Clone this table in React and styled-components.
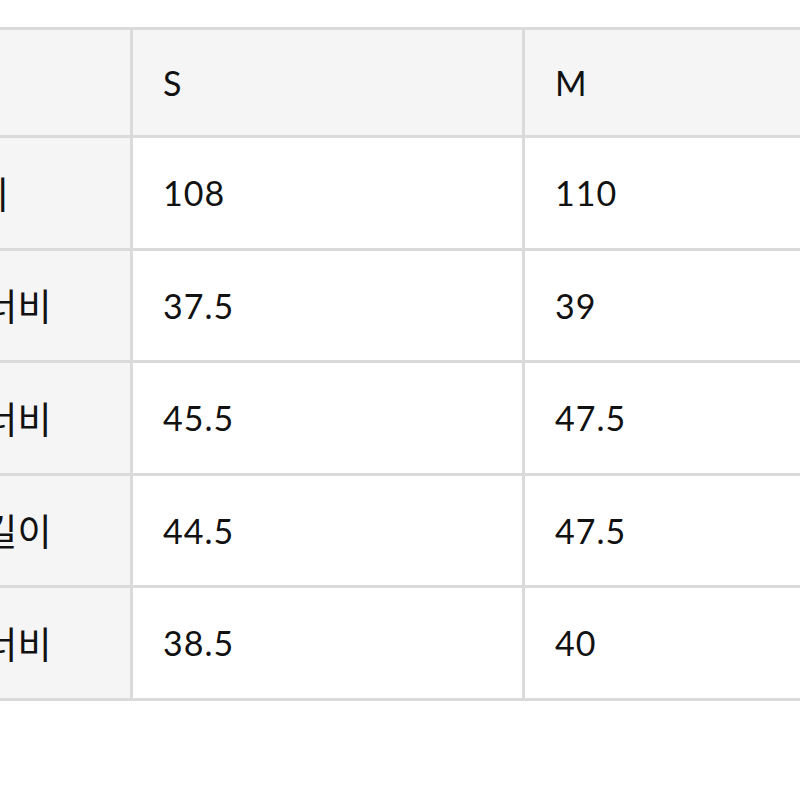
import React from "react";
import styled, { createGlobalStyle } from "styled-components";

const Global = createGlobalStyle`
  html, body { margin: 0; padding: 0; background: #ffffff; }
  body { overflow: hidden; width: 800px; height: 800px; }
`;

const Page = styled.div`
  width: 800px;
  height: 800px;
  overflow: hidden;
  background: #ffffff;
  padding-top: 27px;
  box-sizing: border-box;
`;

const Table = styled.div`
  display: grid;
  grid-template-columns: 244px 389px 389px;
  grid-template-rows: 105px repeat(5, 109.5px);
  gap: 3px;
  padding: 3px;
  background: #dadada;
  width: max-content;
  margin-left: -117px;
`;

const Cell = styled.div`
  display: flex;
  align-items: center;
  padding-left: 30px;
  background: ${(p) => (p.$shaded ? "#f5f5f5" : "#ffffff")};
  color: #111111;
  font-family: Lato, "Noto Sans CJK KR", sans-serif;
  font-size: 34px;
  letter-spacing: 1px;
  white-space: nowrap;
`;

const LabelCell = styled(Cell)`
  padding-left: 21px;
  background: #f5f5f5;
  font-family: "Noto Sans CJK KR", sans-serif;
  font-size: 37px;
  letter-spacing: 0;
`;

const sizes = ["S", "M", "L"];
const rows = [
  ["총길이", "108", "110", "112"],
  ["어깨 너비", "37.5", "39", "40.5"],
  ["가슴 너비", "45.5", "47.5", "49.5"],
  ["소매 길이", "44.5", "47.5", "48.5"],
  ["밑단 너비", "38.5", "40", "41.5"],
];

export default function App() {
  return (
    <Page>
      <Global />
      <Table>
        <LabelCell />
        {sizes.slice(0, 2).map((s) => (
          <Cell key={s} $shaded>
            {s}
          </Cell>
        ))}
        {rows.map((r) => (
          <React.Fragment key={r[0]}>
            <LabelCell>{r[0]}</LabelCell>
            <Cell>{r[1]}</Cell>
            <Cell>{r[2]}</Cell>
          </React.Fragment>
        ))}
      </Table>
    </Page>
  );
}
